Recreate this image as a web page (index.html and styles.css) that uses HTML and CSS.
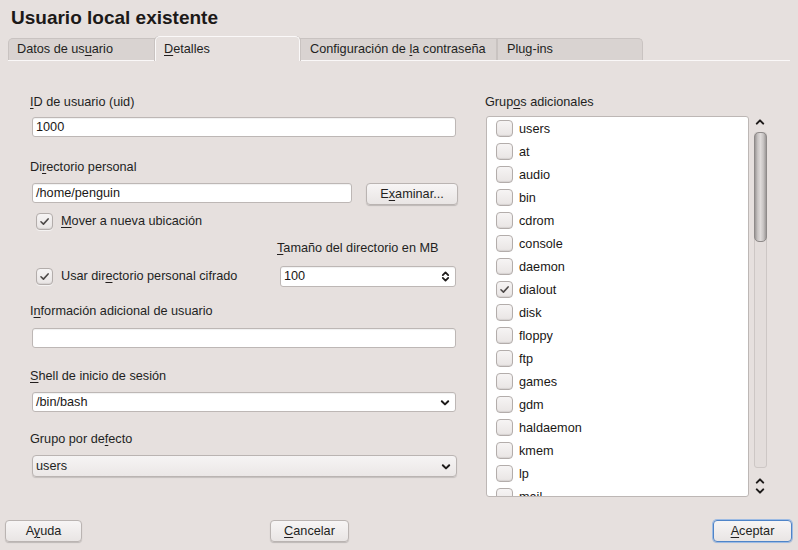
FILE: index.html
```html
<!DOCTYPE html>
<html lang="es">
<head>
<meta charset="utf-8">
<title>Usuario local existente</title>
<link rel="stylesheet" href="styles.css">
</head>
<body>
<div class="dialog">
  <h1 class="title">Usuario local existente</h1>
  <div class="tabs">
    <div class="tab t1">Datos de us<u>u</u>ario</div>
    <div class="tab t2 active"><u>D</u>etalles</div>
    <div class="tab t3">Configuración de <u>l</u>a contraseña</div>
    <div class="tab t4">Plu<u>g</u>-ins</div>
  </div>
  <div class="main">
    <div class="left">
      <div class="label l-uid"><u>I</u>D de usuario (uid)</div>
      <div class="input">1000</div>

      <div class="label l-dir">Di<u>r</u>ectorio personal</div>
      <div class="row">
        <div class="input grow">/home/penguin</div>
        <div class="button examinar">E<u>x</u>aminar...</div>
      </div>
      <div class="check-row move">
        <span class="checkbox checked"><svg viewBox="0 0 17 17"><path d="M4.5 8.8 L7.3 11.5 L12.6 5.6" /></svg></span>
        <span><u>M</u>over a nueva ubicación</span>
      </div>
      <div class="size-label"><u>T</u>amaño del directorio en MB</div>
      <div class="row crypt-row">
        <div class="check-row">
          <span class="checkbox checked"><svg viewBox="0 0 17 17"><path d="M4.5 8.8 L7.3 11.5 L12.6 5.6" /></svg></span>
          <span>Usar dir<u>e</u>ctorio personal cifrado</span>
        </div>
        <div class="input spin">100
          <svg class="spin-arrows" viewBox="0 0 10 14"><path d="M2 5.5 L5 2.5 L8 5.5 M2 8.5 L5 11.5 L8 8.5"/></svg>
        </div>
      </div>

      <div class="label l-info">I<u>n</u>formación adicional de usuario</div>
      <div class="input"></div>

      <div class="label l-shell"><u>S</u>hell de inicio de sesión</div>
      <div class="input combo">/bin/bash
        <svg class="drop" viewBox="0 0 10 8"><path d="M1.8 2.2 L5 5.4 L8.2 2.2"/></svg>
      </div>

      <div class="label l-group">Grupo por de<u>f</u>ecto</div>
      <div class="combo ro">users
        <svg class="drop" viewBox="0 0 10 8"><path d="M1.8 2.2 L5 5.4 L8.2 2.2"/></svg>
      </div>
    </div>

    <div class="right">
      <div class="label l-groups">Grup<u>o</u>s adicionales</div>
      <div class="list-wrap">
        <div class="list">
          <div class="item"><span class="checkbox"></span>users</div>
          <div class="item"><span class="checkbox"></span>at</div>
          <div class="item"><span class="checkbox"></span>audio</div>
          <div class="item"><span class="checkbox"></span>bin</div>
          <div class="item"><span class="checkbox"></span>cdrom</div>
          <div class="item"><span class="checkbox"></span>console</div>
          <div class="item"><span class="checkbox"></span>daemon</div>
          <div class="item"><span class="checkbox checked"><svg viewBox="0 0 17 17"><path d="M4.5 8.8 L7.3 11.5 L12.6 5.6" /></svg></span>dialout</div>
          <div class="item"><span class="checkbox"></span>disk</div>
          <div class="item"><span class="checkbox"></span>floppy</div>
          <div class="item"><span class="checkbox"></span>ftp</div>
          <div class="item"><span class="checkbox"></span>games</div>
          <div class="item"><span class="checkbox"></span>gdm</div>
          <div class="item"><span class="checkbox"></span>haldaemon</div>
          <div class="item"><span class="checkbox"></span>kmem</div>
          <div class="item"><span class="checkbox"></span>lp</div>
          <div class="item"><span class="checkbox"></span>mail</div>
        </div>
        <div class="scrollbar">
          <svg class="arrow up-top" viewBox="0 0 10 8"><path d="M1.8 5.6 L5 2.4 L8.2 5.6"/></svg>
          <div class="groove"><div class="slider"></div></div>
          <svg class="arrow up-bottom" viewBox="0 0 10 8"><path d="M1.8 5.6 L5 2.4 L8.2 5.6"/></svg>
          <svg class="arrow down-bottom" viewBox="0 0 10 8"><path d="M1.8 2.4 L5 5.6 L8.2 2.4"/></svg>
        </div>
      </div>
    </div>
  </div>
  <div class="footer">
    <div class="button ayuda">A<u>y</u>uda</div>
    <div class="button cancelar"><u>C</u>ancelar</div>
    <div class="button aceptar default"><u>A</u>ceptar</div>
  </div>
</div>
</body>
</html>
```

FILE: styles.css
```css
* { box-sizing: border-box; }
html, body {
  margin: 0;
  padding: 0;
  background: #e6e0de;
}
body {
  width: 798px;
  height: 550px;
  overflow: hidden;
  font-family: "Liberation Sans", Arial, sans-serif;
  font-size: 12.7px;
  color: #231f1e;
}
u { text-decoration: underline; text-underline-offset: 2px; }

.title {
  margin: 0;
  padding: 7px 0 0 11px;
  height: 37px;
  font-size: 19px;
  line-height: 22px;
  font-weight: bold;
  color: #1c1918;
}

.tabs {
  display: flex;
  align-items: flex-end;
  margin: 0 8px 0 8px;
  height: 24px;
  border-bottom: 1px solid #faf8f8;
  position: relative;
}
.tab {
  height: 22px;
  line-height: 21px;
  padding-left: 8px;
  background: #d9d3d1;
  border: 1px solid #c9c3c1;
  border-bottom: none;
  white-space: nowrap;
  color: #231f1e;
}
.t1 { width: 147px; border-radius: 5px 0 0 0; }
.t2 { width: 145px; }
.t3 { width: 197px; padding-left: 9px; }
.t4 { width: 146px; border-radius: 0 5px 0 0; padding-left: 9px; }
.tab.active {
  height: 25px;
  margin-bottom: -1px;
  line-height: 24px;
  background: #e6e0de;
  border: 1px solid #fbf9f9;
  border-bottom: none;
  border-radius: 5px 5px 0 0;
  box-shadow: 1px 0 0 #c9c3c1, -1px 0 0 #c9c3c1;
}

.main {
  display: flex;
  padding-left: 30px;
}
.left {
  width: 428px;
  padding-top: 33px;
}
.right {
  margin-left: 27px;
  width: 285px;
  padding-top: 33px;
}

.label {
  height: 16px;
  line-height: 16px;
  white-space: nowrap;
}
.l-uid { margin-bottom: 7px; }
.l-groups { margin-bottom: 6px; }
.l-dir { margin-top: 22px; margin-bottom: 8px; }
.l-info { margin-top: 16px; margin-bottom: 9px; }
.l-shell { margin-top: 20px; margin-bottom: 8px; }
.l-group { margin-top: 19px; margin-bottom: 8px; }

.input {
  position: relative;
  margin-left: 2px;
  width: 424px;
  height: 20px;
  line-height: 19px;
  padding-left: 3px;
  background: #ffffff;
  border: 1px solid #bdb7b5;
  border-radius: 3px;
  box-shadow: inset 0 1px 1px rgba(0,0,0,0.06);
  color: #1a1716;
}

.row { display: flex; align-items: flex-start; }
.input.grow { width: 320px; }
.button {
  height: 22px;
  line-height: 20px;
  text-align: center;
  border: 1px solid #bab4b2;
  border-radius: 4px;
  background: linear-gradient(#f7f5f5, #e9e5e4);
  box-shadow: 0 1px 1px rgba(0,0,0,0.18);
  color: #231f1e;
  white-space: nowrap;
}
.examinar { width: 92px; margin-left: 14px; }

.check-row {
  display: flex;
  align-items: center;
  white-space: nowrap;
}
.move { margin-left: 6px; margin-top: 5px; height: 22px; }
.checkbox {
  display: inline-block;
  width: 17px;
  height: 17px;
  margin-right: 8px;
  border: 1px solid #b3adab;
  border-radius: 4px;
  background: linear-gradient(#f6f4f4, #e9e5e4);
  box-shadow: inset 0 -1px 1px rgba(0,0,0,0.08), 0 1px 0 rgba(255,255,255,0.6);
  flex: none;
}
.checkbox svg { display: block; width: 15px; height: 15px; }
.checkbox path {
  fill: none;
  stroke: #4d4948;
  stroke-width: 1.8;
  stroke-linecap: round;
  stroke-linejoin: round;
}

.size-label {
  margin-top: 8px;
  margin-left: 247px;
  height: 16px;
  line-height: 16px;
  white-space: nowrap;
}
.crypt-row { margin-top: 9px; justify-content: space-between; align-items: center; height: 22px; }
.crypt-row .check-row { margin-left: 6px; }
.input.spin { width: 176px; height: 21px; margin-left: 0; margin-right: 2px; }
.spin-arrows {
  position: absolute;
  right: 5px;
  top: 3px;
  width: 9px;
  height: 13px;
}
.spin-arrows path, .drop path, .arrow path {
  fill: none;
  stroke: #1e1b1a;
  stroke-width: 2;
  stroke-linecap: round;
  stroke-linejoin: round;
}

.combo { position: relative; }
.combo .drop {
  position: absolute;
  right: 5px;
  top: 6px;
  width: 10px;
  height: 8px;
}
.combo.ro {
  margin-left: 2px;
  width: 425px;
  height: 22px;
  line-height: 20px;
  padding-left: 3px;
  border: 1px solid #bab4b2;
  border-radius: 4px;
  background: linear-gradient(#f6f4f4, #ebe7e6);
  box-shadow: 0 1px 1px rgba(0,0,0,0.15);
}
.combo.ro .drop { top: 7px; }

.list-wrap {
  display: flex;
  margin-left: 1px;
}
.list {
  width: 263px;
  height: 381px;
  overflow: hidden;
  background: #ffffff;
  border: 1px solid #bdb7b5;
  border-radius: 3px;
}
.item {
  display: flex;
  align-items: center;
  height: 23px;
  padding-left: 9px;
  color: #1a1716;
  white-space: nowrap;
}
.item .checkbox { margin-right: 6px; }

.scrollbar {
  width: 14px;
  margin-left: 4px;
  display: flex;
  flex-direction: column;
  align-items: center;
  padding-top: 2px;
}
.arrow { width: 10px; height: 8px; display: block; flex: none; }
.groove {
  width: 13px;
  height: 336px;
  margin-top: 6px;
  border: 1px solid #cdc7c5;
  border-radius: 3px;
  background: #e3dddb;
}
.slider {
  margin: -1px;
  height: 110px;
  border-radius: 5px;
  border: 1px solid #8e8a89;
  background: linear-gradient(90deg, #9c9897 0%, #c9c5c4 25%, #dedad9 50%, #c9c5c4 75%, #9c9897 100%);
}
.arrow.up-bottom { margin-top: 9px; }
.arrow.down-bottom { margin-top: 2px; }

.footer {
  position: relative;
  display: flex;
  margin-top: 23px;
  padding: 0 6px 0 5px;
  height: 22px;
}
.ayuda { width: 77px; }
.cancelar { width: 79px; margin-left: 188px; }
.aceptar { width: 79px; margin-left: auto; }
.button.default {
  border: 1px solid #4f84c8;
  box-shadow: 0 0 0 1px #9dbbe3, 0 1px 1px rgba(0,0,0,0.15);
}
```
